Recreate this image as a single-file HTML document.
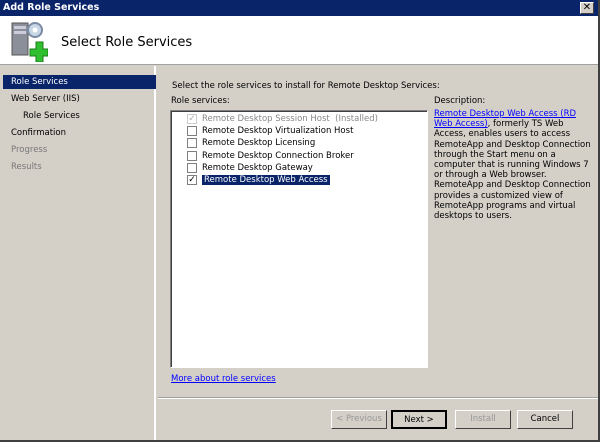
<!DOCTYPE html>
<html><head><style>
*{margin:0;padding:0;box-sizing:border-box}
body{width:600px;height:442px;background:#d4d0c8;font-family:Tahoma,"DejaVu Sans","Liberation Sans",sans-serif;font-size:8.5px;color:#000;position:relative;overflow:hidden;border-right:2px solid #404040;border-bottom:2px solid #404040}
.a{position:absolute;white-space:nowrap}
.title{left:0;top:0;width:598px;height:16px;background:#0a246a;color:#fff;font-weight:bold;font-size:9.5px;padding:2px 3px}
.close{right:4px;top:2px;width:14px;height:12px;background:#d4d0c8;border:1px solid;border-color:#fff #404040 #404040 #fff;color:#000;font-size:10px;line-height:10px;text-align:center;font-weight:bold}
.hdr{left:0;top:16px;width:598px;height:49px;background:#fff;border-bottom:1px solid #a0a0a0}
.left{left:0;top:66px;width:156px;height:374px;background:#d4d0c8;border-right:2px solid #fff}
.nav{left:11px;font-size:8.5px}
.cb{width:10px;height:10px;border:1px solid #808080;background:#fff;display:inline-block;vertical-align:middle;margin-right:5px;font-size:9px;line-height:8px;text-align:center}
.row{left:187px;height:12px;line-height:12px}
.btn{top:410px;height:19px;width:56px;border:1px solid;border-color:#fff #404040 #404040 #fff;text-align:center;line-height:16px;background:#d4d0c8}
a{color:#00f;text-decoration:underline}
</style></head><body>
<div class="a title">Add Role Services</div>
<div class="a close">✕</div>
<div class="a hdr"></div>
<svg class="a" style="left:10px;top:20px" width="38" height="42" viewBox="0 0 38 42">
<rect x="2" y="3" width="16" height="32" fill="#8a8f99" stroke="#555"/>
<rect x="4" y="6" width="12" height="3" fill="#ccd"/><rect x="4" y="11" width="12" height="3" fill="#ccd"/>
<circle cx="25" cy="10" r="7" fill="#c9d6e6" stroke="#7a8ca4" stroke-width="2"/><circle cx="25" cy="10" r="2.5" fill="#fff"/>
<path d="M26 22h7v7h5v7h-5v6h-7v-6h-6v-7h6z" fill="#2fbf2f" stroke="#1a7d1a"/>
</svg>
<div class="a" style="left:61px;top:35px;font-size:13px;font-family:'DejaVu Sans',sans-serif">Select Role Services</div>
<div class="a left"></div>
<div class="a" style="left:3px;top:75px;width:153px;height:14px;background:#0a246a"></div>
<div class="a nav" style="top:77px;color:#fff">Role Services</div>
<div class="a nav" style="top:94px">Web Server (IIS)</div>
<div class="a nav" style="top:111px;left:23px">Role Services</div>
<div class="a nav" style="top:128px">Confirmation</div>
<div class="a nav" style="top:145px;color:#777">Progress</div>
<div class="a nav" style="top:162px;color:#777">Results</div>
<div class="a" style="left:172px;top:81px">Select the role services to install for Remote Desktop Services:</div>
<div class="a" style="left:171px;top:96px">Role services:</div>
<div class="a" style="left:170px;top:110px;width:258px;height:258px;background:#fff;border:1px solid;border-color:#808080 #fff #fff #808080;box-shadow:inset 1px 1px 0 #404040"></div>
<div class="a row" style="top:113px;left:187px;color:#888"><span class="cb" style="border-color:#ccc;color:#aaa">✓</span>Remote Desktop Session Host &nbsp;(Installed)</div>
<div class="a row" style="top:125px"><span class="cb"></span>Remote Desktop Virtualization Host</div>
<div class="a row" style="top:137px"><span class="cb"></span>Remote Desktop Licensing</div>
<div class="a row" style="top:150px"><span class="cb"></span>Remote Desktop Connection Broker</div>
<div class="a row" style="top:162px"><span class="cb"></span>Remote Desktop Gateway</div>
<div class="a row" style="top:174px"><span class="cb">✓</span><span style="background:#0a246a;color:#fff;padding:0 2px">Remote Desktop Web Access</span></div>
<div class="a" style="left:434px;top:96px">Description:</div>
<div class="a" style="left:434px;top:109px;width:160px;white-space:normal;line-height:10.2px"><a>Remote Desktop Web Access (RD Web Access)</a>, formerly TS Web Access, enables users to access RemoteApp and Desktop Connection through the Start menu on a computer that is running Windows 7 or through a Web browser. RemoteApp and Desktop Connection provides a customized view of RemoteApp programs and virtual desktops to users.</div>
<div class="a" style="left:171px;top:374px"><a>More about role services</a></div>
<div class="a" style="left:158px;top:397px;width:440px;height:2px;border-top:1px solid #a0a0a0;border-bottom:1px solid #fff"></div>
<div class="a btn" style="left:331px;color:#999">&lt; Previous</div>
<div class="a btn" style="left:391px;border:2px solid #000">Next &gt;</div>
<div class="a btn" style="left:455px;color:#999">Install</div>
<div class="a btn" style="left:517px">Cancel</div>
</body></html>
